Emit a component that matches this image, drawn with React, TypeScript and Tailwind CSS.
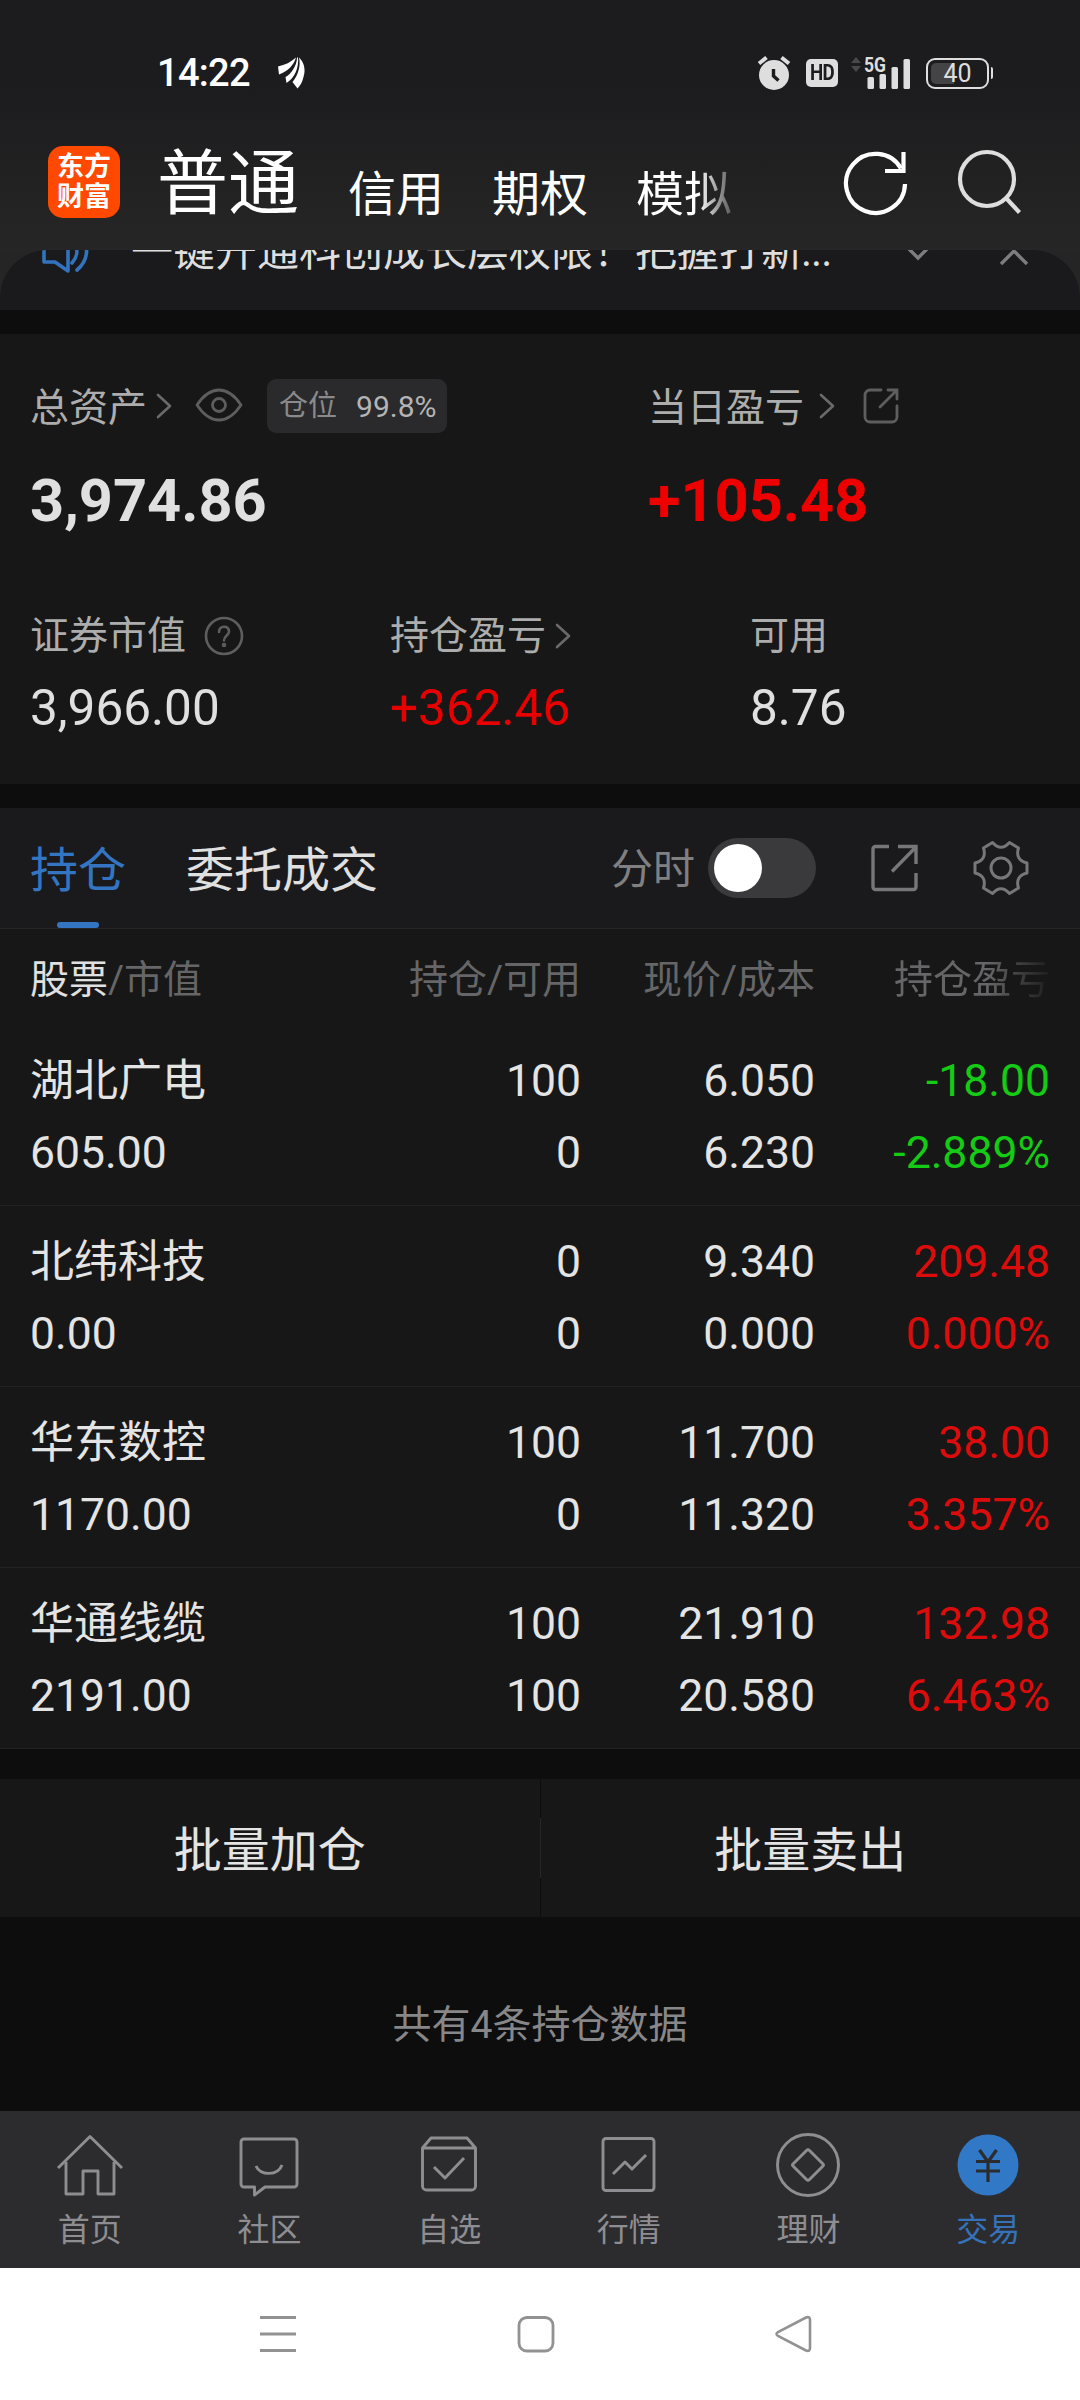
import React from 'react';

const holdings = [
  { name: '湖北广电', value: '605.00', qty: '100', available: '0', price: '6.050', cost: '6.230', profit: '-18.00', rate: '-2.889%', up: false },
  { name: '北纬科技', value: '0.00', qty: '0', available: '0', price: '9.340', cost: '0.000', profit: '209.48', rate: '0.000%', up: true },
  { name: '华东数控', value: '1170.00', qty: '100', available: '0', price: '11.700', cost: '11.320', profit: '38.00', rate: '3.357%', up: true },
  { name: '华通线缆', value: '2191.00', qty: '100', available: '100', price: '21.910', cost: '20.580', profit: '132.98', rate: '6.463%', up: true },
];

const Chevron = ({ className = '' }: { className?: string }) => (
  <svg className={`shrink-0 ${className}`} width="18" height="28" viewBox="0 0 18 28" fill="none" stroke="#6a6a6a" strokeWidth="2.6" strokeLinecap="round" strokeLinejoin="round">
    <path d="M3 3l12 11L3 25" />
  </svg>
);

const StatusBar = () => (
  <div className="flex h-[146px] items-center pl-[157px] pr-[87px] text-white">
    <span className="w-[94px] whitespace-nowrap text-[38px] font-medium leading-none tracking-[-0.7px]">14:22</span>
    <svg className="ml-[26px]" width="28" height="32" viewBox="0 0 28 32" fill="#fff">
      <path d="M1 9.500C8 8 14 5 19 .500C17 8 10 15 2 17.500Z" />
      <path d="M20 .500C20 9 14 17 8.500 20L9.500 26C18 21 22 10 21 .500Z" />
      <path d="M22 .500C28 6 28.500 14 26.500 20C25.500 25 23 29 20.500 31.500L15.500 25C21 18 24 9 22 .500Z" />
    </svg>

    <div className="ml-auto flex items-center">
      <svg width="34" height="36" viewBox="0 0 34 36">
        <circle cx="17" cy="20" r="15" fill="#dedede" />
        <path d="M2 8.500L9.500 2.500M24.500 2.500L32 8.500" stroke="#dedede" strokeWidth="4" />
        <path d="M16.500 14v7l5 4.500" fill="none" stroke="#1c1c1e" strokeWidth="3.400" />
      </svg>
      <div className="ml-[15px] flex h-[28px] w-[32px] items-center justify-center rounded-[5px] bg-[#dedede] text-[22px] font-bold leading-none tracking-[-1px] text-[#1c1c1e]">
        <span className="scale-x-[0.85]">HD</span>
      </div>
      <svg className="ml-[11px] overflow-visible" width="62" height="34" viewBox="0 0 62 34">
        <path d="M2 7l5-6 5 6ZM2 10l5 6 5-6Z" fill="#48484a" />
        <text x="15" y="16" fill="#dedede" fontSize="21" fontWeight="700" textLength="22" lengthAdjust="spacingAndGlyphs">5G</text>
        <rect x="18.500" y="21" width="6.500" height="12" rx="1.500" fill="#dedede" />
        <rect x="30.500" y="18" width="6.500" height="15" rx="1.500" fill="#dedede" />
        <rect x="42.500" y="11" width="6.500" height="22" rx="1.500" fill="#dedede" />
        <rect x="54.500" y="3" width="6.500" height="30" rx="1.500" fill="#dedede" />
      </svg>
      <div className="relative ml-[15px] flex h-[31px] w-[63px] items-center justify-center rounded-[9px] border-2 border-[#dedede]">
        <div className="absolute left-[3px] top-[3px] h-[21px] w-[23px] rounded-l-[5px] bg-[#444446]" />
        <span className="relative text-[25px] leading-none text-[#dedede]">40</span>
      </div>
      <div className="ml-[2px] h-[12px] w-[2px] rounded-r bg-[#dedede]" />
    </div>
  </div>
);

const TopNav = () => (
  <div className="flex h-[104px] items-start pl-[48px] pr-[56px] text-white">
    <div className="flex h-[72px] w-[72px] shrink-0 flex-col items-center justify-center rounded-[15px] bg-[#ff4800] text-[27px] font-bold leading-[30px]">
      <span>东方</span>
      <span>财富</span>
    </div>
    <span className="ml-[37px] mt-[2px] text-[71px] leading-[72px]">普通</span>
    <div className="ml-[49px] mt-[25px] flex gap-[48px] text-[48px] leading-[48px]">
      <span>信用</span>
      <span>期权</span>
      <span className="bg-linear-to-r from-white from-65% to-[#5a5a5a] bg-clip-text text-transparent">模拟</span>
    </div>
    <svg className="ml-auto mt-[4px]" width="66" height="66" viewBox="0 0 66 66" fill="none" stroke="#fff" strokeWidth="4.200">
      <path d="M62 34A29.500 29.500 0 1 1 58 18.500" />
      <path d="M60.500 2V21H42" />
    </svg>
    <svg className="ml-[47px] mt-[2px]" width="68" height="68" viewBox="0 0 68 68" fill="none" stroke="#dedede" strokeWidth="4.200">
      <circle cx="31" cy="31" r="27" />
      <path d="M50 50L63.500 64.500" />
    </svg>
  </div>
);

const NoticeBar = () => (
  <div className="bg-[#252525]">
    <div className="h-[60px] overflow-hidden rounded-t-[48px] bg-[#1a1a1c]">
      <div className="-mt-[58px] flex h-[120px] items-center pl-[41px] pr-[51px]">
        <svg width="48" height="44" viewBox="0 0 48 44" fill="none" stroke="#3373bd" strokeWidth="3.600" strokeLinejoin="round" strokeLinecap="round">
          <path d="M3 12h11L27 3v38L14 32H3Z" />
          <path d="M33 14c4 5 4 12-2 19M40 5c8 10 8 25-4 35" />
        </svg>
        <span className="ml-[42px] whitespace-nowrap text-[42px] leading-[60px] text-[#dedede]">
          一键开通科创成长层权限！把握打新<span className="-ml-[2px] tracking-[-1px]">...</span>
        </span>
        <svg className="ml-auto" width="30" height="18" viewBox="0 0 30 18" fill="none" stroke="#7d7d80" strokeWidth="3.400">
          <path d="M2 2l13 13L28 2" />
        </svg>
        <svg className="ml-[66px] mt-[12px]" width="30" height="18" viewBox="0 0 30 18" fill="none" stroke="#7d7d80" strokeWidth="3.400">
          <path d="M2 15L15 2l13 13" />
        </svg>
      </div>
    </div>
  </div>
);

const AssetPanel = () => (
  <div className="mt-[24px] h-[450px] bg-[#171717] px-[30px] pt-[45px] text-[39px] text-[#adadad]">
    <div className="flex">
      <div className="w-[618px]">
        <div className="flex h-[54px] items-center">
          <span className="pt-[4px]">总资产</span>
          <Chevron className="ml-[8px]" />
          <svg className="ml-[22px] -mt-[3px]" width="48" height="34" viewBox="0 0 48 34" fill="none" stroke="#5e5e5e" strokeWidth="2.800">
            <path d="M2 17C9 6.500 16 2 24 2s15 4.500 22 15C39 27.500 32 32 24 32S9 27.500 2 17Z" strokeLinejoin="round" />
            <circle cx="24" cy="17" r="6.500" />
          </svg>
          <div className="ml-[24px] flex h-[54px] w-[180px] items-center rounded-[9px] bg-[#2a2a2c] pl-[12px] text-[29px]">
            <span className="pt-[2px] text-[#8a8a8c]">仓位</span>
            <span className="ml-[19px] text-[30px] text-[#b4b4b6]">99.8%</span>
          </div>
        </div>
        <div className="mt-[33px] text-[59.500px] font-bold leading-[70px] text-[#e0e0e0]">3,974.86</div>
      </div>
      <div>
        <div className="flex h-[54px] items-center">
          <span className="pt-[4px]">当日盈亏</span>
          <Chevron className="ml-[14px]" />
          <svg className="ml-[27px]" width="36" height="36" viewBox="0 0 36 36" fill="none" stroke="#5e5e5e" strokeWidth="2.800" strokeLinecap="round">
            <path d="M18 2H7a5 5 0 0 0-5 5v22a5 5 0 0 0 5 5h22a5 5 0 0 0 5-5V18" />
            <path d="M25 2h9v9M33 3L17 19" />
          </svg>
        </div>
        <div className="mt-[33px] text-[59.500px] font-bold leading-[70px] text-[#ee0000]">+105.48</div>
      </div>
    </div>

    <div className="mt-[70px] grid grid-cols-[360px_360px_1fr]">
      <div>
        <div className="flex h-[60px] items-center">
          <span>证券市值</span>
          <svg className="ml-[17px]" width="42" height="42" viewBox="0 0 42 42" fill="none" stroke="#5e5e5e" strokeWidth="2.600">
            <circle cx="21" cy="21" r="18" />
            <path d="M16 17c0-7 10-7 10-.500 0 4-5 4-5 9" strokeLinecap="round" />
            <circle cx="21" cy="30" r="1" />
          </svg>
        </div>
        <div className="mt-[13px] text-[49.500px] leading-[58px] text-[#e0e0e0]">3,966.00</div>
      </div>
      <div>
        <div className="flex h-[60px] items-center">
          <span>持仓盈亏</span>
          <Chevron className="ml-[8px]" />
        </div>
        <div className="mt-[13px] text-[49.500px] leading-[58px] text-[#e80000]">+362.46</div>
      </div>
      <div>
        <div className="flex h-[60px] items-center">可用</div>
        <div className="mt-[13px] text-[49.500px] leading-[58px] text-[#e0e0e0]">8.76</div>
      </div>
    </div>
  </div>
);

const HoldingTabs = () => (
  <div className="mt-[24px] flex h-[121px] border-b border-[#262628] bg-[#1a1a1c] pl-[30px] pr-[50px] text-[48px]">
    <div className="flex flex-col items-center text-[#3375c2]">
      <span className="mt-[2px] h-[112px] leading-[122px]">持仓</span>
      <div className="h-[6px] w-[42px] rounded-[3px] bg-[#3375c2]" />
    </div>
    <span className="ml-[60px] mt-[2px] leading-[122px] text-[#e0e0e0]">委托成交</span>
    <div className="ml-auto flex h-[120px] items-center">
      <span className="pt-[3px] text-[42px] text-[#808082]">分时</span>
      <div className="ml-[13px] h-[60px] w-[108px] rounded-full bg-[#3a3a3c] p-[6px]">
        <div className="h-[48px] w-[48px] rounded-full bg-white" />
      </div>
      <svg className="ml-[53px]" width="50" height="50" viewBox="0 0 50 50" fill="none" stroke="#77777a" strokeWidth="3.400">
        <path d="M20 3.500H6.500a2.500 2.500 0 0 0-2.500 2.500v38a2.500 2.500 0 0 0 2.500 2.500h38a2.500 2.500 0 0 0 2.500-2.500V30" />
        <path d="M29 3.500h18V21M46 5L23 28.500" />
      </svg>
      <svg className="ml-[53px]" width="58" height="58" viewBox="0 0 58 58" fill="none" stroke="#77777a" strokeWidth="3" strokeLinejoin="round">
        <path d="M20.500 3.500Q29 13 37.500 3.500L46.500 9C44 17 47 22 55 24V34C47 36 44 41 46.500 49L37.500 54.500Q29 45 20.500 54.500L11.500 49C14 41 11 36 3 34V24C11 22 14 17 11.500 9Z" />
        <circle cx="29" cy="29" r="10" />
      </svg>
    </div>
  </div>
);

const HoldingTable = () => (
  <div className="bg-[#171717]">
    <div className="grid h-[96px] grid-cols-[310px_241px_234px_235px] items-center px-[30px] pt-[7px] text-right text-[39px] text-[#666668]">
      <span className="text-left"><span className="text-[#e0e0e0]">股票</span>/市值</span>
      <span>持仓/可用</span>
      <span>现价/成本</span>
      <span className="ml-auto bg-linear-to-r from-[#666668] from-60% to-[#1e1e1e] bg-clip-text text-transparent">持仓盈亏</span>
    </div>
    {holdings.map((item) => (
      <div key={item.name} className="grid h-[181px] grid-cols-[310px_241px_234px_235px] items-center border-b border-[#232325] px-[30px] pt-[4px] text-right text-[44.500px] leading-[72px] text-[#e4e4e4]">
        <div className="text-left">
          <div className="text-[44px]">{item.name}</div>
          <div>{item.value}</div>
        </div>
        <div>
          <div>{item.qty}</div>
          <div>{item.available}</div>
        </div>
        <div>
          <div>{item.price}</div>
          <div>{item.cost}</div>
        </div>
        <div className={item.up ? 'text-[#dc0c0c]' : 'text-[#14cc14]'}>
          <div>{item.profit}</div>
          <div>{item.rate}</div>
        </div>
      </div>
    ))}
  </div>
);

const BatchActions = () => (
  <div className="mt-[30px] flex h-[138px] items-center bg-[#171717] text-center text-[48px] text-[#e4e4e4]">
    <span className="flex-1 pt-[5px]">批量加仓</span>
    <div className="flex h-full w-px flex-col justify-center bg-[#0d0d0d]">
      <div className="h-[60px] bg-[#262628]" />
    </div>
    <span className="flex-1 pt-[5px]">批量卖出</span>
  </div>
);

const navItems = [
  {
    label: '首页',
    icon: (
      <>
        <path d="M3 35L35 3.500 67 35" />
        <path d="M11 29V61H28V38H43V61H59V29" />
      </>
    ),
  },
  {
    label: '社区',
    icon: (
      <>
        <path d="M10 6H60a3 3 0 0 1 3 3V51a3 3 0 0 1-3 3H31L20.500 62V54H10a3 3 0 0 1-3-3V9a3 3 0 0 1 3-3Z" />
        <path d="M22 33C26 43 44 43 48 32" />
      </>
    ),
  },
  {
    label: '自选',
    icon: (
      <>
        <path d="M8.500 15L17 5H53L61.500 15V53a4 4 0 0 1-4 4H12.500a4 4 0 0 1-4-4ZM8.500 15H61.500" />
        <path d="M20 34L31 45 50 25" />
      </>
    ),
  },
  {
    label: '行情',
    icon: (
      <>
        <rect x="9" y="5.500" width="51" height="52" rx="3" />
        <path d="M19 41L31 29 38 36 52 22" />
      </>
    ),
  },
  {
    label: '理财',
    icon: (
      <>
        <circle cx="35" cy="32" r="30.500" />
        <path d="M33.500 17.500Q35 16 36.500 17.500L50 31Q51 32 50 33L36.500 46.500Q35 48 33.500 46.500L20 33Q19 32 20 31Z" />
      </>
    ),
  },
  {
    label: '交易',
    active: true,
    icon: (
      <>
        <circle cx="35" cy="32" r="30.500" fill="#3178c6" stroke="none" />
        <path d="M26.500 17L35 29 43.500 17M35 29V49M23 28.500H47M23 38H47" stroke="#2c2c2e" strokeWidth="3.200" />
      </>
    ),
  },
];

const BottomNav = () => (
  <div className="grid h-[157px] grid-cols-6 bg-[#2c2c2e] pr-[2px] pt-[22px]">
    {navItems.map((item) => (
      <div key={item.label} className={`flex flex-col items-center ${item.active ? 'text-[#3572b9]' : 'text-[#8e8e92]'}`}>
        <svg width="70" height="66" viewBox="0 0 70 66" fill="none" stroke="currentColor" strokeWidth="2.900" strokeLinejoin="round">
          {item.icon}
        </svg>
        <span className="mt-[11px] text-[32px] leading-[40px]">{item.label}</span>
      </div>
    ))}
  </div>
);

const SystemNav = () => (
  <div className="flex h-[132px] items-center bg-white pl-[259px]">
    <svg width="38" height="38" viewBox="0 0 38 38" stroke="#929292" strokeWidth="3">
      <path d="M1 2.500H37M1 19H37M1 35.500H37" />
    </svg>
    <svg className="ml-[220px]" width="38" height="38" viewBox="0 0 38 38" fill="none" stroke="#929292" strokeWidth="2.800">
      <rect x="2" y="2.500" width="34" height="33.500" rx="8" />
    </svg>
    <svg className="ml-[219px]" width="38" height="38" viewBox="0 0 38 38" fill="none" stroke="#929292" strokeWidth="2.600">
      <path d="M32 2.500Q36 1 36 5V33Q36 37 32 35.500L4 21Q1 19 4 17Z" />
    </svg>
  </div>
);

const App = () => {
  return (
    <div className="flex h-[2400px] w-[1080px] flex-col overflow-hidden bg-[#0d0d0d] font-['Roboto','Noto_Sans_CJK_SC',sans-serif]">
      <header className="h-[250px] shrink-0 bg-linear-to-b from-[#1c1c1e] from-35% to-[#262626]">
        <StatusBar />
        <TopNav />
      </header>
      <NoticeBar />
      <AssetPanel />
      <HoldingTabs />
      <HoldingTable />
      <BatchActions />
      <div className="flex flex-1 items-center justify-center pt-[22px] text-[39px] text-[#87878a]">共有4条持仓数据</div>
      <BottomNav />
      <SystemNav />
    </div>
  );
};

export default App;
